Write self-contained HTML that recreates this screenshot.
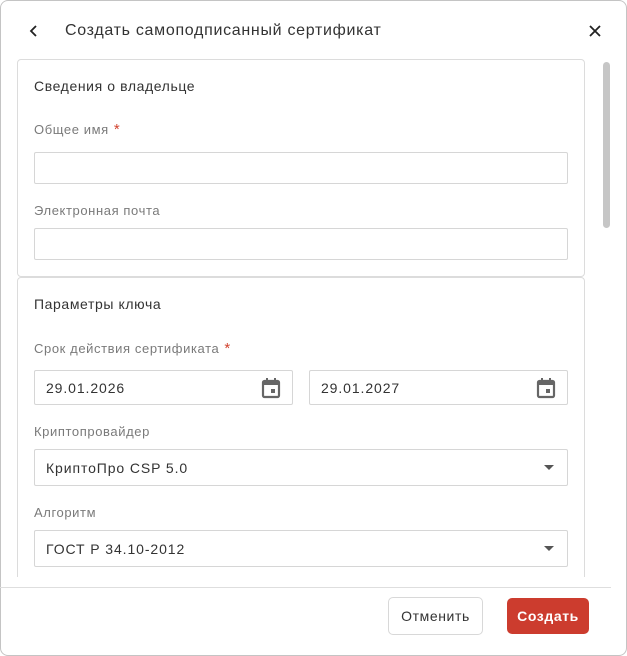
<!DOCTYPE html>
<html><head><meta charset="utf-8">
<style>
*{box-sizing:border-box;margin:0;padding:0}
html,body{width:627px;height:656px;background:#fff;overflow:hidden}
body{font-family:"Liberation Sans","Noto Sans CJK SC",sans-serif;position:relative;letter-spacing:0.6px}
.win{position:absolute;left:0;top:0;width:627px;height:656px;border:1px solid #c4c4c4;border-radius:8px;background:#fff}
.a{position:absolute}
.title{left:65px;top:21px;font-size:16px;color:#333;line-height:20px;letter-spacing:0.7px}
.clip{position:absolute;left:0;top:0;width:611px;height:577px;overflow:hidden}
.card{position:absolute;left:17px;width:568px;border:1px solid #dcdcdc;border-radius:4px;background:#fff}
.h{font-size:14px;color:#333;line-height:18px}
.lbl{font-size:13px;color:#7a7a7a;line-height:16px}
.req{color:#d2432f;font-size:15px;margin-left:5px}
.inp{position:absolute;border:1px solid #d6d6d6;border-radius:2px;background:#fff;font-size:14px;color:#333;letter-spacing:0.9px}
.inp span{position:absolute;left:11px;top:50%;transform:translateY(-50%)}
.sb{left:603px;top:62px;width:7px;height:166px;background:#c6c6c6;border-radius:4px}
.line{left:0;top:587px;width:611px;height:1px;background:#dedede}
.btn{position:absolute;border-radius:5px;font-size:14px;text-align:center}
</style></head><body>
<div class="win"></div>
<svg class="a" style="left:27px;top:23px" width="14" height="16" viewBox="0 0 14 16"><path d="M9 3 L4 8 L9 13" stroke="#222" stroke-width="1.8" fill="none"/></svg>
<div class="a title">Создать самоподписанный сертификат</div>
<svg class="a" style="left:587px;top:23px" width="16" height="16" viewBox="0 0 16 16"><path d="M3 3 L13 13 M13 3 L3 13" stroke="#222" stroke-width="1.8"/></svg>
<div class="clip">
 <div class="card" style="top:59px;height:218px"></div>
 <div class="card" style="top:277px;height:340px"></div>
 <div class="a h" style="left:34px;top:77px">Сведения о владельце</div>
 <div class="a lbl" style="left:34px;top:122px">Общее имя<span class="req">*</span></div>
 <div class="inp" style="left:34px;top:152px;width:534px;height:32px"></div>
 <div class="a lbl" style="left:34px;top:203px">Электронная почта</div>
 <div class="inp" style="left:34px;top:228px;width:534px;height:32px"></div>
 <div class="a h" style="left:34px;top:295px">Параметры ключа</div>
 <div class="a lbl" style="left:34px;top:341px">Срок действия сертификата<span class="req">*</span></div>
 <div class="inp" style="left:34px;top:370px;width:259px;height:35px"><span>29.01.2026</span>
  <svg class="a" style="left:225px;top:5px" width="22" height="24" viewBox="0 0 22 24"><rect x="3" y="5" width="16" height="16" rx="1.5" fill="none" stroke="#666" stroke-width="2.2"/><rect x="3" y="5" width="16" height="4" fill="#666"/><rect x="6" y="2" width="2" height="4" fill="#666"/><rect x="14" y="2" width="2" height="4" fill="#666"/><rect x="11" y="13" width="4" height="4" fill="#666"/></svg></div>
 <div class="inp" style="left:309px;top:370px;width:259px;height:35px"><span>29.01.2027</span>
  <svg class="a" style="left:225px;top:5px" width="22" height="24" viewBox="0 0 22 24"><rect x="3" y="5" width="16" height="16" rx="1.5" fill="none" stroke="#666" stroke-width="2.2"/><rect x="3" y="5" width="16" height="4" fill="#666"/><rect x="6" y="2" width="2" height="4" fill="#666"/><rect x="14" y="2" width="2" height="4" fill="#666"/><rect x="11" y="13" width="4" height="4" fill="#666"/></svg></div>
 <div class="a lbl" style="left:34px;top:424px">Криптопровайдер</div>
 <div class="inp" style="left:34px;top:449px;width:534px;height:37px"><span>КриптоПро CSP 5.0</span>
  <svg class="a" style="left:508px;top:14px" width="12" height="8" viewBox="0 0 12 8"><path d="M1 1 L11 1 L6 6 Z" fill="#555"/></svg></div>
 <div class="a lbl" style="left:34px;top:505px">Алгоритм</div>
 <div class="inp" style="left:34px;top:530px;width:534px;height:37px"><span>ГОСТ Р 34.10-2012</span>
  <svg class="a" style="left:508px;top:14px" width="12" height="8" viewBox="0 0 12 8"><path d="M1 1 L11 1 L6 6 Z" fill="#555"/></svg></div>
</div>
<div class="a sb"></div>
<div class="a line"></div>
<div class="btn" style="left:388px;top:597px;width:95px;height:38px;border:1px solid #d8d8d8;color:#333;line-height:36px">Отменить</div>
<div class="btn" style="left:507px;top:598px;width:82px;height:36px;background:#cc3c2e;color:#fff;line-height:36px;font-weight:bold">Создать</div>
</body></html>
